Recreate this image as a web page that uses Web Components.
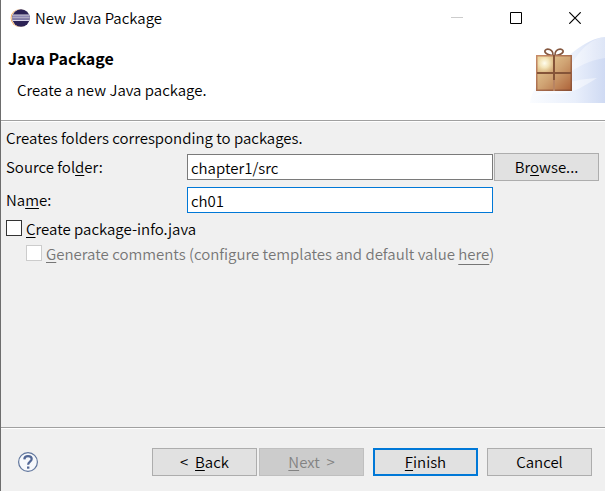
<!DOCTYPE html>
<html lang="en">
<head>
<meta charset="utf-8">
<meta name="viewport" content="width=device-width, initial-scale=1">
<title>New Java Package</title>
<style>
    body {
        margin: 0;
        background: #f0f0f0;
        color: #000;
        font: 350 15px/20px "Noto Sans CJK KR", "Noto Sans", sans-serif;
    }

    u {
        text-underline-offset: 2px;
        text-decoration-thickness: 1px;
        text-decoration-skip-ink: none;
    }

    a {
        color: inherit;
        text-underline-offset: 4px;
        text-decoration-thickness: 1px;
        text-decoration-skip-ink: none;
    }
</style>
</head>
<body>
<wizard-dialog>
    <title-bar slot="title">New Java Package</title-bar>
    <wizard-header slot="header">
        Java Package
        <span slot="message">Create a new Java package.</span>
    </wizard-header>

    <div>Creates folders corresponding to packages.</div>
    <text-field value="chapter1/src">
        Source fol<u>d</u>er:
        <push-button slot="action">Br<u>o</u>wse...</push-button>
    </text-field>
    <text-field value="ch01" active>Na<u>m</u>e:</text-field>
    <check-option><u>C</u>reate package-info.java</check-option>
    <check-option disabled nested><u>G</u>enerate comments (configure templates and default value <a href="#">here</a>)</check-option>

    <wizard-footer slot="footer">
        <push-button slot="nav">&lt; &nbsp;<u>B</u>ack</push-button>
        <push-button slot="nav" disabled><u>N</u>ext &nbsp;&gt;</push-button>
        <push-button primary><u>F</u>inish</push-button>
        <push-button>Cancel</push-button>
    </wizard-footer>
</wizard-dialog>

<script>
class WizardDialog extends HTMLElement {
    constructor() {
        super();
        this.attachShadow({ mode: 'open' });
    }

    connectedCallback() {
        this.shadowRoot.innerHTML = `
        <style>
            :host {
                display: flex;
                flex-direction: column;
                box-sizing: border-box;
                min-height: 100vh;
                border-left: 1px solid #6d6d6d;
            }

            main {
                display: flex;
                flex-direction: column;
                flex-grow: 1;
                gap: 5px;
                padding: 7px 6px 6px 5px;
            }
        </style>
        <slot name="title"></slot>
        <slot name="header"></slot>
        <main><slot></slot></main>
        <slot name="footer"></slot>
        `;
    }
}

class TitleBar extends HTMLElement {
    constructor() {
        super();
        this.attachShadow({ mode: 'open' });
    }

    connectedCallback() {
        this.shadowRoot.innerHTML = `
        <style>
            :host {
                display: flex;
                align-items: center;
                height: 36px;
                padding-left: 9px;
                background: #fff;
            }

            .logo {
                margin-right: 5px;
            }

            .caption {
                flex-grow: 1;
            }

            button {
                display: grid;
                place-items: center;
                width: 58px;
                height: 36px;
                margin-right: 1px;
                padding: 0;
                border: 0;
                background: none;
                color: #000;
            }

            button:disabled {
                color: #ccc;
            }

            svg {
                display: block;
            }
        </style>
        <svg class="logo" width="20" height="20" viewBox="0 0 20 20">
            <circle cx="9.5" cy="10" r="8.8" fill="#f39a43"/>
            <circle cx="10.3" cy="10" r="8.9" fill="#fff3df"/>
            <circle cx="11" cy="10" r="8.8" fill="#2c2255"/>
            <path d="M2.6 7.2h16.8M2.3 9.8h17.4M2.6 12.4h16.8" stroke="#d9d6e8" stroke-width="1.3"/>
            <path d="M2.4 8.5h17.2M2.4 11.1h17.2" stroke="#8f88b5" stroke-width="1.2"/>
        </svg>
        <span class="caption"><slot></slot></span>
        <button type="button" aria-label="Minimize" disabled>
            <svg width="12" height="12" viewBox="0 0 12 12"><path d="M0 5.5h12" stroke="currentColor"/></svg>
        </button>
        <button type="button" aria-label="Maximize">
            <svg width="12" height="12" viewBox="0 0 12 12"><path d="M.5.5h11v11H.5z" fill="none" stroke="currentColor"/></svg>
        </button>
        <button type="button" aria-label="Close">
            <svg width="12" height="12" viewBox="0 0 12 12"><path d="M.3.3l11.4 11.4M11.7.3L.3 11.7" stroke="currentColor" stroke-width="1.2"/></svg>
        </button>
        `;
    }
}

class WizardHeader extends HTMLElement {
    constructor() {
        super();
        this.attachShadow({ mode: 'open' });
    }

    connectedCallback() {
        this.shadowRoot.innerHTML = `
        <style>
            :host {
                display: flex;
                justify-content: space-between;
                background: #fff;
                border-bottom: 1px solid #a0a0a0;
                box-shadow: 0 1px #fff;
            }

            .text {
                padding: 12px 0 20px 7px;
            }

            h1 {
                margin: 0 0 12px;
                font-size: 16px;
                line-height: 20px;
            }

            p {
                margin: 0 0 0 9px;
            }

            svg {
                display: block;
            }
        </style>
        <div class="text">
            <h1><slot></slot></h1>
            <p><slot name="message"></slot></p>
        </div>
        <svg width="75" height="67" viewBox="0 0 75 67">
            <defs>
                <linearGradient id="sky" x1="0" x2="1">
                    <stop offset="0" stop-color="#fafcff"/>
                    <stop offset=".6" stop-color="#e9effb"/>
                    <stop offset="1" stop-color="#cfdaf3"/>
                </linearGradient>
                <linearGradient id="ray" x1="0" x2="1">
                    <stop offset="0" stop-color="#fff" stop-opacity=".8"/>
                    <stop offset="1" stop-color="#fff" stop-opacity=".5"/>
                </linearGradient>
                <linearGradient id="box" x1="0" y1="0" x2="1" y2="1">
                    <stop offset="0" stop-color="#ecd59c"/>
                    <stop offset=".5" stop-color="#d0a474"/>
                    <stop offset="1" stop-color="#ad6238"/>
                </linearGradient>
                <radialGradient id="shine" cx=".23" cy=".22" r=".3">
                    <stop offset="0" stop-color="#fffdf0"/>
                    <stop offset=".45" stop-color="#f8edc5" stop-opacity=".8"/>
                    <stop offset="1" stop-color="#ecd59c" stop-opacity="0"/>
                </radialGradient>
                <linearGradient id="edge" x1="0" y1="0" x2="1" y2="1">
                    <stop offset="0" stop-color="#c78b68"/>
                    <stop offset="1" stop-color="#8b5034"/>
                </linearGradient>
            </defs>
            <path d="M0 67C2 54 7 49 14 44C35 22 54 3 75 1V67Z" fill="url(#sky)"/>
            <path d="M35 40C46 18 58 3 75 1V22C60 24 48 30 35 40Z" fill="url(#ray)" opacity=".6"/>
            <path d="M2 61C24 50 44 43 67 42C54 50 44 57 30 58C18 57 9 59 2 61Z" fill="#fff" opacity=".45"/>
            <path d="M23 19C19 20 14 17 15 14.500C17 12 23 13 23 19ZM25 19C29 20 34 17 33 14.500C31 12 25 13 25 19Z" fill="#fff" fill-opacity=".5" stroke="#84573f" stroke-width="1.600"/>
            <path d="M6.500 19.500h35v35h-35z" fill="url(#box)"/>
            <path d="M6.500 19.500h35v35h-35z" fill="url(#shine)"/>
            <path d="M6.750 19.750h34.500v34.500h-34.500z" fill="none" stroke="url(#edge)" stroke-width="1.500"/>
            <path d="M24 19v36M7 37h34" stroke="#855438" stroke-width="2"/>
            <path d="M24 44v11" stroke="#b88463" stroke-width="2"/>
        </svg>
        `;
    }
}

class TextField extends HTMLElement {
    constructor() {
        super();
        this.attachShadow({ mode: 'open' });
    }

    connectedCallback() {
        const value = this.getAttribute('value') || '';

        this.shadowRoot.innerHTML = `
        <style>
            :host {
                display: grid;
                grid-template-columns: 180px 1fr 105px;
                column-gap: 1px;
                align-items: center;
                min-height: 28px;
            }

            input {
                box-sizing: border-box;
                width: 100%;
                min-width: 0;
                height: 26px;
                padding: 0 3px;
                border: 1px solid #7a7a7a;
                border-radius: 0;
                outline: 0;
                background: #fff;
                color: inherit;
                font: inherit;
            }

            :host([active]) input,
            input:focus {
                border-color: #0078d7;
            }
        </style>
        <label for="field"><slot></slot></label>
        <input id="field" type="text" value="${value}">
        <slot name="action"></slot>
        `;
    }
}

class CheckOption extends HTMLElement {
    constructor() {
        super();
        this.attachShadow({ mode: 'open' });
    }

    connectedCallback() {
        const disabled = this.hasAttribute('disabled') ? 'disabled' : '';

        this.shadowRoot.innerHTML = `
        <style>
            :host {
                display: flex;
                align-items: flex-start;
                gap: 4px;
            }

            :host([nested]) {
                padding-left: 20px;
            }

            :host([disabled]) {
                color: #767676;
            }

            input {
                appearance: none;
                flex: none;
                box-sizing: border-box;
                width: 16px;
                height: 16px;
                margin: 1px 0 0;
                border: 1px solid #333;
                background: #fff;
            }

            input:checked {
                background: #0078d7;
            }

            input:disabled {
                border-color: #ccc;
            }
        </style>
        <input id="check" type="checkbox" ${disabled}>
        <label for="check"><slot></slot></label>
        `;
    }
}

class PushButton extends HTMLElement {
    constructor() {
        super();
        this.attachShadow({ mode: 'open' });
    }

    connectedCallback() {
        const disabled = this.hasAttribute('disabled') ? 'disabled' : '';

        this.shadowRoot.innerHTML = `
        <style>
            :host {
                display: block;
                width: 105px;
            }

            button {
                box-sizing: border-box;
                width: 100%;
                height: 28px;
                padding: 0;
                border: 1px solid #adadad;
                background: #e1e1e1;
                color: #000;
                font: inherit;
                white-space: nowrap;
            }

            button:hover {
                background: #e5f1fb;
            }

            button:disabled {
                border-color: #bfbfbf;
                background: #ccc;
                color: #838383;
            }

            :host([primary]) button {
                border: 2px solid #0078d7;
            }
        </style>
        <button type="button" ${disabled}><slot></slot></button>
        `;
    }
}

class WizardFooter extends HTMLElement {
    constructor() {
        super();
        this.attachShadow({ mode: 'open' });
    }

    connectedCallback() {
        this.shadowRoot.innerHTML = `
        <style>
            :host {
                display: flex;
                align-items: center;
                gap: 9px;
                padding: 20px 13px 15px 17px;
                border-top: 1px solid #a0a0a0;
                box-shadow: inset 0 1px #fff;
            }

            .help {
                width: 20px;
                height: 20px;
                margin-right: auto;
                padding: 0;
                border: 0;
                background: none;
            }

            .nav {
                display: flex;
                gap: 2px;
            }

            svg {
                display: block;
            }
        </style>
        <button class="help" type="button" aria-label="Help">
            <svg width="20" height="20" viewBox="0 0 20 20" fill="none">
                <circle cx="10" cy="10" r="9.400" fill="#f6f8fb" stroke="#60769d" stroke-width="1.200"/>
                <path d="M6.300 7.300C6.500 5 8 4.200 10 4.200c2.300 0 3.700 1.100 3.700 2.900 0 2.500-3.600 2.800-3.600 5.700" stroke="#526795" stroke-width="2.200"/>
                <path d="M9 14.500h2.400v2.200H9z" fill="#526795"/>
            </svg>
        </button>
        <div class="nav"><slot name="nav"></slot></div>
        <slot></slot>
        `;
    }
}

customElements.define('wizard-dialog', WizardDialog);
customElements.define('title-bar', TitleBar);
customElements.define('wizard-header', WizardHeader);
customElements.define('text-field', TextField);
customElements.define('check-option', CheckOption);
customElements.define('push-button', PushButton);
customElements.define('wizard-footer', WizardFooter);
</script>
</body>
</html>
